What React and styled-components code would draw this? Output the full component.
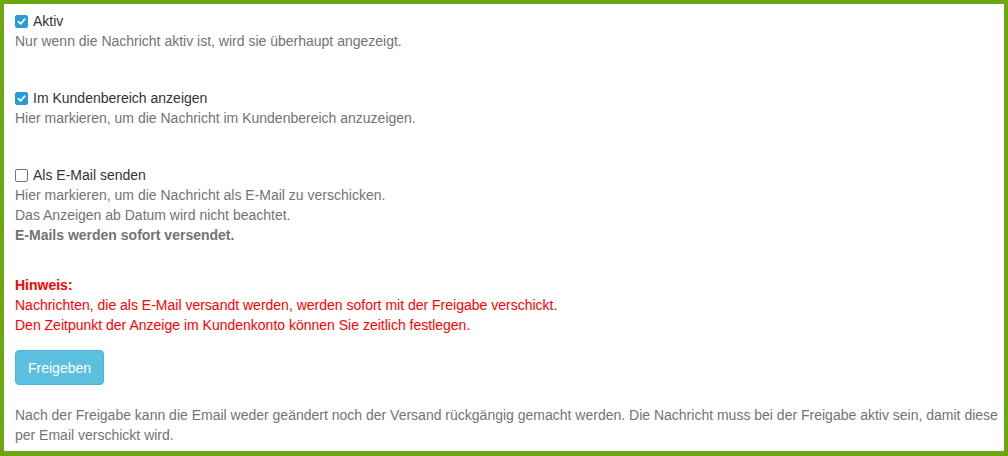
import React from 'react';
import styled, { createGlobalStyle } from 'styled-components';

const GlobalStyle = createGlobalStyle`
  html, body {
    margin: 0;
    padding: 0;
    background: #fff;
  }
  body {
    font-family: "Liberation Sans", Arial, sans-serif;
    font-size: 14px;
    line-height: 20px;
    color: #333;
  }
`;

const Panel = styled.div`
  box-sizing: border-box;
  width: 1008px;
  height: 456px;
  border: 4px solid #6ca611;
  border-bottom-width: 5px;
  padding: 7px 0 5px 11px;
  display: flex;
  flex-direction: column;
`;

const Group = styled.div`
  display: flex;
  flex-direction: column;
  margin-bottom: ${props => props.gap || 0}px;
`;

const CheckRow = styled.label`
  display: flex;
  align-items: center;
  gap: 5px;
  height: 20px;
  color: #333;
  cursor: pointer;
`;

const Box = styled.span`
  box-sizing: border-box;
  width: 13px;
  height: 13px;
  margin-top: 1px;
  border-radius: 2px;
  display: flex;
  align-items: center;
  justify-content: center;
  background: ${props => (props.checked ? '#2b9ad8' : '#fff')};
  border: 1px solid ${props => (props.checked ? '#2b9ad8' : '#767676')};
`;

const Help = styled.div`
  color: #737373;
  font-weight: ${props => (props.bold ? 700 : 400)};
`;

const Notice = styled.div`
  color: #ff0000;
  font-weight: ${props => (props.bold ? 700 : 400)};
`;

const Button = styled.button`
  align-self: flex-start;
  font-family: inherit;
  font-size: 14px;
  line-height: 20px;
  padding: 7px 12px 6px;
  color: #fff;
  background: #5bc0de;
  border: 1px solid #46b8da;
  border-radius: 4px;
  cursor: pointer;
  margin-bottom: 20px;
`;

const Checkbox = ({ checked, label }) => (
  <CheckRow>
    <Box checked={checked}>
      {checked && (
        <svg width="9" height="9" viewBox="0 0 10 10">
          <path d="M1.5 5.2 L4 7.6 L8.6 2.4" fill="none" stroke="#fff" strokeWidth="1.8" strokeLinecap="round" strokeLinejoin="round" />
        </svg>
      )}
    </Box>
    <span>{label}</span>
  </CheckRow>
);

export default function App() {
  return (
    <>
      <GlobalStyle />
      <Panel>
        <Group gap={37}>
          <Checkbox checked label="Aktiv" />
          <Help>Nur wenn die Nachricht aktiv ist, wird sie überhaupt angezeigt.</Help>
        </Group>
        <Group gap={37}>
          <Checkbox checked label="Im Kundenbereich anzeigen" />
          <Help>Hier markieren, um die Nachricht im Kundenbereich anzuzeigen.</Help>
        </Group>
        <Group gap={30}>
          <Checkbox label="Als E-Mail senden" />
          <Help>Hier markieren, um die Nachricht als E-Mail zu verschicken.</Help>
          <Help>Das Anzeigen ab Datum wird nicht beachtet.</Help>
          <Help bold>E-Mails werden sofort versendet.</Help>
        </Group>
        <Group gap={15}>
          <Notice bold>Hinweis:</Notice>
          <Notice>Nachrichten, die als E-Mail versandt werden, werden sofort mit der Freigabe verschickt.</Notice>
          <Notice>Den Zeitpunkt der Anzeige im Kundenkonto können Sie zeitlich festlegen.</Notice>
        </Group>
        <Button>Freigeben</Button>
        <Help>
          Nach der Freigabe kann die Email weder geändert noch der Versand rückgängig gemacht werden. Die Nachricht muss bei der Freigabe aktiv sein, damit diese per Email verschickt wird.
        </Help>
      </Panel>
    </>
  );
}
